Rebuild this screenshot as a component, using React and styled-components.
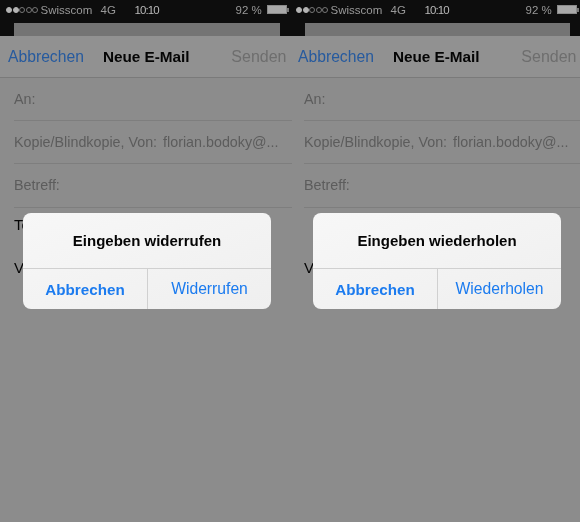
import styled, { createGlobalStyle } from "styled-components";

const GlobalStyle = createGlobalStyle`
    html, body {
        margin: 0;
        padding: 0;
        background: #8c8c8c;
    }
    body {
        font-family: "Liberation Sans", Arial, sans-serif;
    }
`;

export default function App() {
    return (
        <>
            <GlobalStyle />
            <Page>
                <Phone
                    sheetLeft={14}
                    bleed
                    title="Eingeben widerrufen"
                    action="Widerrufen"
                    body={["Test", "Von meinem iPhone gesendet"]}
                />
                <Phone
                    sheetLeft={15}
                    title="Eingeben wiederholen"
                    action="Wiederholen"
                    body={["", "Von meinem iPhone gesendet"]}
                />
            </Page>
        </>
    );
}

function Phone({ sheetLeft, bleed, title, action, body }) {
    return (
        <Screen>
            <Top>
                <StatusBar>
                    <Dots>
                        {[1, 1, 0, 0, 0].map((on, i) => (
                            <Dot key={i} $on={on} />
                        ))}
                    </Dots>
                    <Carrier>Swisscom</Carrier>
                    <Network>4G</Network>
                    <Clock>10:10</Clock>
                    <Percent>92 %</Percent>
                    <Battery />
                </StatusBar>
                <Sheet $left={sheetLeft} />
            </Top>
            <Nav>
                <Cancel>Abbrechen</Cancel>
                <NavTitle>Neue E-Mail</NavTitle>
                <Send>Senden</Send>
            </Nav>
            <Row $bleed={bleed}>
                <Label>An:</Label>
            </Row>
            <Row $bleed={bleed}>
                <Label>Kopie/Blindkopie, Von:</Label>
                <Sender>florian.bodoky@...</Sender>
            </Row>
            <Row $bleed={bleed}>
                <Label>Betreff:</Label>
            </Row>
            <MailBody>
                {body.map((line, i) => (
                    <BodyLine key={i}>{line}</BodyLine>
                ))}
            </MailBody>
            <Alert>
                <AlertTitle>{title}</AlertTitle>
                <AlertButtons>
                    <AlertButton $bold>Abbrechen</AlertButton>
                    <AlertButton>{action}</AlertButton>
                </AlertButtons>
            </Alert>
        </Screen>
    );
}

const Page = styled.div`
    display: grid;
    grid-template-columns: 290px 290px;
    width: 580px;
    height: 522px;
    overflow: hidden;
    background: #8c8c8c;
    filter: blur(0.4px);
`;

const Screen = styled.div`
    position: relative;
    height: 522px;
`;

const Top = styled.div`
    height: 36px;
    background: #0d0d0d;
    display: flex;
    flex-direction: column;
`;

const StatusBar = styled.div`
    height: 23px;
    padding: 0 0 4px 6px;
    box-sizing: border-box;
    display: flex;
    align-items: center;
    font-size: 11.5px;
    color: #999;
    white-space: nowrap;
`;

const Dots = styled.div`
    display: flex;
    gap: 0.5px;
`;

const Dot = styled.span`
    width: 6px;
    height: 6px;
    box-sizing: border-box;
    border-radius: 50%;
    border: 1px solid ${(p) => (p.$on ? "#b4b4b4" : "#777")};
    background: ${(p) => (p.$on ? "#b4b4b4" : "transparent")};
`;

const Carrier = styled.span`
    margin-left: 2.5px;
    width: 60px;
`;

const Network = styled.span`
    width: 34px;
`;

const Clock = styled.span`
    width: 24px;
    font-size: 11.5px;
    letter-spacing: -0.9px;
    color: #b8b8b8;
`;

const Percent = styled.span`
    margin-left: 77px;
    width: 31px;
`;

const Battery = styled.span`
    position: relative;
    width: 18px;
    height: 7px;
    border: 1px solid #8a8a8a;
    background: #a8a8a8;

    &::after {
        content: "";
        position: absolute;
        right: -3px;
        top: 1.5px;
        width: 1.5px;
        height: 4px;
        background: #777;
    }
`;

const Sheet = styled.div`
    flex: 1;
    margin: 0 10px 0 ${(p) => p.$left}px;
    background: #747474;
`;

const Nav = styled.div`
    height: 41px;
    padding: 0 3.5px 0 8px;
    display: flex;
    align-items: center;
    background: #919191;
    border-bottom: 1px solid #7a7a7a;
    font-size: 15.7px;
`;

const Cancel = styled.span`
    color: #265a9e;
`;

const NavTitle = styled.span`
    margin-left: 19px;
    color: #050505;
    font-size: 15.3px;
    font-weight: 700;
`;

const Send = styled.span`
    margin-left: auto;
    color: #6e6e6e;
    font-size: 16px;
`;

const Row = styled.div`
    height: 43.2px;
    box-sizing: border-box;
    margin: 0 ${(p) => (p.$bleed ? "-2px" : "0")} 0 14px;
    padding-bottom: 1px;
    display: flex;
    align-items: center;
    gap: 6px;
    border-bottom: 1px solid #7e7e7e;
    font-size: 14.3px;
    color: #5c5c5c;
`;

const Label = styled.span`
    white-space: nowrap;
`;

const Sender = styled.span`
    white-space: nowrap;
`;

const MailBody = styled.div`
    padding: 0 0 0 14px;
    display: flex;
    flex-direction: column;
`;

const BodyLine = styled.div`
    height: 43px;
    line-height: 34px;
    font-size: 15px;
    color: #050505;
    white-space: nowrap;
`;

const Alert = styled.div`
    position: absolute;
    left: 23px;
    top: 213px;
    width: 248px;
    height: 96px;
    display: flex;
    flex-direction: column;
    border-radius: 8px;
    overflow: hidden;
    background: linear-gradient(160deg, #f7f7f7, #efefef);
`;

const AlertTitle = styled.div`
    height: 56px;
    box-sizing: border-box;
    display: flex;
    align-items: center;
    justify-content: center;
    border-bottom: 1px solid #d0d0d0;
    font-size: 15px;
    font-weight: 700;
    color: #050505;
`;

const AlertButtons = styled.div`
    flex: 1;
    display: grid;
    grid-template-columns: 124px 1fr;
`;

const AlertButton = styled.div`
    display: flex;
    align-items: center;
    justify-content: center;
    font-size: ${(p) => (p.$bold ? "15.2px" : "15.7px")};
    font-weight: ${(p) => (p.$bold ? 700 : 400)};
    color: #1b7bef;
    & + & {
        border-left: 1px solid #d0d0d0;
    }
`;
